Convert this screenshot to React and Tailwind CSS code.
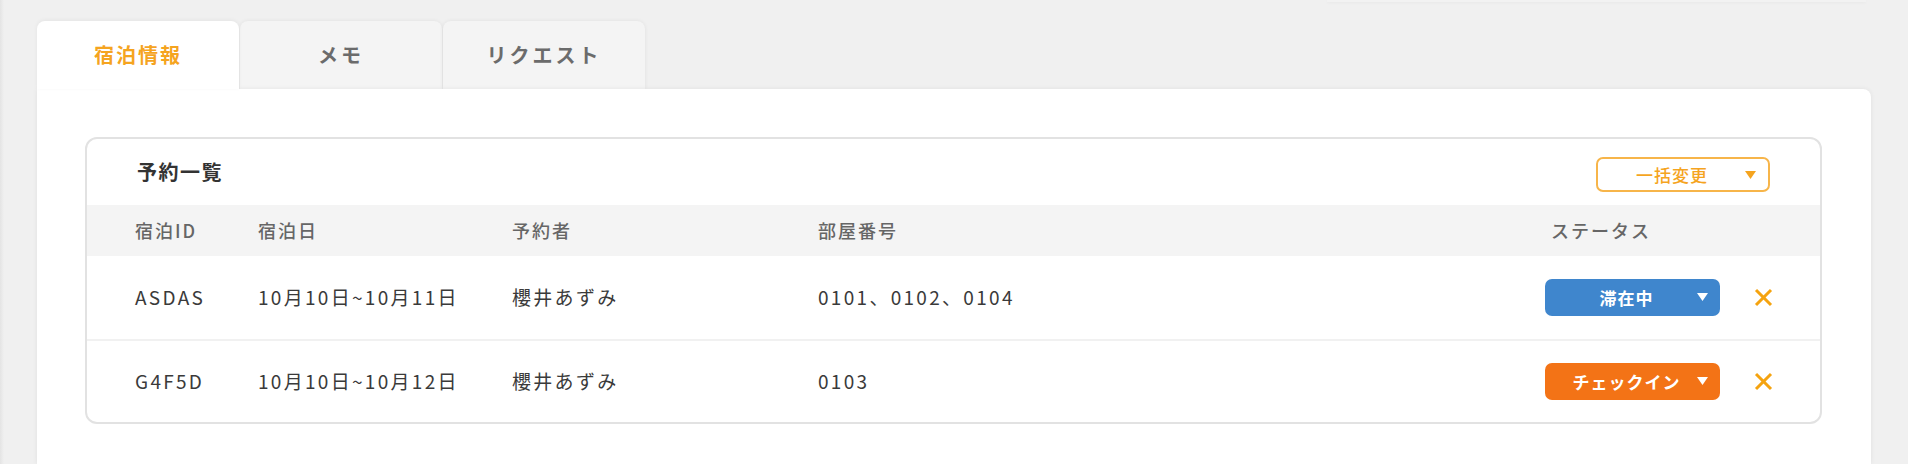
import React from "react";

function Tri({ color, className }) {
  return (
    <svg width="11" height="8" viewBox="0 0 11 8" className={className}>
      <polygon points="0,0 11,0 5.5,8" fill={color} />
    </svg>
  );
}

function XIcon() {
  return (
    <svg width="19" height="19" viewBox="0 0 19 19" className="block">
      <line x1="2" y1="2" x2="17" y2="17" stroke="#f5a30f" strokeWidth="3" strokeLinecap="butt" />
      <line x1="17" y1="2" x2="2" y2="17" stroke="#f5a30f" strokeWidth="3" strokeLinecap="butt" />
    </svg>
  );
}

function StatusButton({ label, bg }) {
  return (
    <div className={`relative h-[37px] w-[175px] rounded-[7px] ${bg} flex items-center`}>
      <div className="flex-1 pr-[12px] text-center text-[17px] font-bold tracking-[1px] text-white">{label}</div>
      <Tri color="#ffffff" className="absolute right-[12px] top-[14px]" />
    </div>
  );
}

const rows = [
  { id: "ASDAS", date: "10月10日~10月11日", name: "櫻井あずみ", room: "0101、0102、0104", status: "滞在中", bg: "bg-[#3f86cd]" },
  { id: "G4F5D", date: "10月10日~10月12日", name: "櫻井あずみ", room: "0103", status: "チェックイン", bg: "bg-[#f37316]" },
];

export default function App() {
  return (
    <div className="relative min-h-[464px] overflow-hidden bg-[#f0f0f0] px-[37px] pt-[21px] font-['Noto_Sans_CJK_JP','Noto_Sans',sans-serif]">
      <div className="absolute left-0 top-0 h-full w-[4px] bg-gradient-to-r from-[#e4e4e4] to-[#f0f0f0]" />
      <div className="absolute left-[1327px] right-[42px] top-0 h-[2px] bg-[#f2f2f2] shadow-[0_1px_3px_rgba(0,0,0,0.04)]" />
      <div className="flex gap-px">
        <div className="relative z-10 flex h-[68px] w-[202px] items-center justify-center rounded-t-[8px] bg-white text-[20px] font-bold tracking-[2px] text-[#f5a41f] shadow-[0_-1px_4px_rgba(0,0,0,0.05)]">
          宿泊情報
        </div>
        <div className="flex h-[68px] w-[202px] items-center justify-center rounded-t-[8px] bg-[#f4f4f4] text-[20px] font-bold tracking-[3px] text-[#6b6b6b] shadow-[0_0_4px_rgba(0,0,0,0.07)]">
          メモ
        </div>
        <div className="flex h-[68px] w-[202px] items-center justify-center rounded-t-[8px] bg-[#f4f4f4] text-[20px] font-bold tracking-[3px] text-[#6b6b6b] shadow-[0_0_4px_rgba(0,0,0,0.07)]">
          リクエスト
        </div>
      </div>
      <div className="relative z-0 rounded-tr-[8px] bg-white pb-[40px] pl-[48px] pr-[49px] pt-[48px] shadow-[0_0_5px_rgba(0,0,0,0.07)]">
        <div className="overflow-hidden rounded-[12px] border-2 border-[#e2e2e2]">
          <div className="flex h-[66px] items-center justify-between pl-[50px] pr-[50px]">
            <div className="text-[20px] font-bold tracking-[1.5px] text-[#333333]">予約一覧</div>
            <div className="relative mt-[5px] flex h-[35px] w-[174px] items-center rounded-[7px] border-2 border-[#f7b54a] bg-white">
              <div className="flex-1 pr-[22px] text-center text-[17px] font-medium tracking-[1px] text-[#f5a41f]">一括変更</div>
              <Tri color="#f5a41f" className="absolute right-[12px] top-[12px]" />
            </div>
          </div>
          <div className="flex h-[51px] items-center bg-[#f4f4f4] pl-[48px] pr-[47px] text-[18px] font-medium tracking-[2px] text-[#666666]">
            <div className="w-[123px]">宿泊ID</div>
            <div className="w-[254px]">宿泊日</div>
            <div className="w-[306px]">予約者</div>
            <div className="flex-1">部屋番号</div>
            <div className="w-[175px] pl-[6px]">ステータス</div>
            <div className="ml-[34px] w-[19px]" />
          </div>
          {rows.map((r, i) => (
            <div
              key={r.id}
              className={`flex h-[83px] items-center pl-[48px] pr-[47px] text-[19px] tracking-[2.3px] text-[#3a3a3a] ${i > 0 ? "border-t-2 border-[#f1f1f1]" : ""}`}
            >
              <div className="w-[123px]">{r.id}</div>
              <div className="w-[254px]">{r.date}</div>
              <div className="w-[306px]">{r.name}</div>
              <div className="flex-1">{r.room}</div>
              <StatusButton label={r.status} bg={r.bg} />
              <div className="ml-[34px] w-[19px]">
                <XIcon />
              </div>
            </div>
          ))}
        </div>
      </div>
    </div>
  );
}
